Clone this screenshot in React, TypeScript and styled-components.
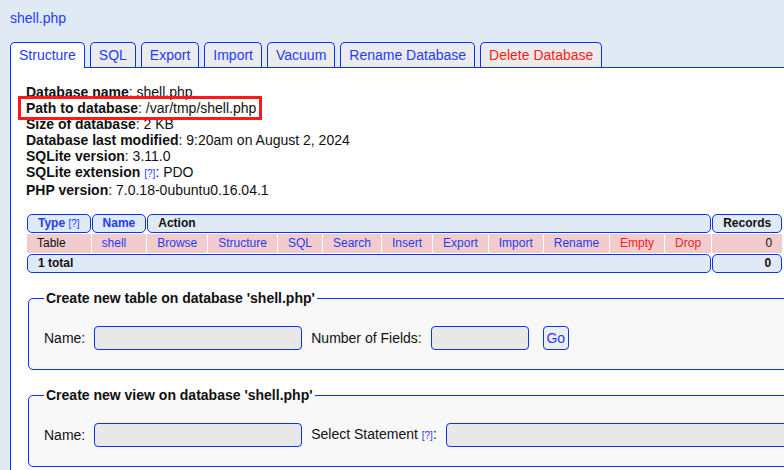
import styled, { createGlobalStyle } from 'styled-components';

const GlobalStyle = createGlobalStyle`
  html, body {
    margin: 0;
    padding: 0;
    overflow: hidden;
    background: #e0eaf5;
  }
  body {
    font-family: "Liberation Sans", Arial, sans-serif;
    font-size: 14px;
    color: #111;
  }
`;

const BLUE = '#1f3cf7';
const BORDER = '#0b32f5';
const RED = '#ff1a1a';

const Page = styled.div`
  width: 1100px;
  padding: 10px 0 0 10px;
`;

const Title = styled.a`
  display: block;
  line-height: 16px;
  color: ${BLUE};
  text-decoration: none;
`;

const Tabs = styled.nav`
  display: flex;
  align-items: flex-end;
  gap: 5px;
  margin-top: 16px;
`;

const Tab = styled.a<{ $active?: boolean; $danger?: boolean }>`
  display: block;
  height: ${(p) => (p.$active ? 25 : 24)}px;
  line-height: 24px;
  padding: 0 8px;
  border: 1px solid ${BORDER};
  border-bottom: none;
  border-radius: 5px 5px 0 0;
  background: ${(p) => (p.$active ? '#fff' : '#ebebeb')};
  color: ${(p) => (p.$danger ? RED : BLUE)};
  margin-bottom: ${(p) => (p.$active ? -1 : 0)}px;
  position: relative;
  z-index: ${(p) => (p.$active ? 1 : 0)};
  text-decoration: none;
`;

const Content = styled.main`
  background: #fff;
  border-left: 1px solid ${BORDER};
  border-top: 1px solid ${BORDER};
  padding: 16px 15px 40px;
  min-height: 420px;
`;

const InfoLine = styled.div`
  line-height: 16px;
`;

const Highlight = styled.span`
  position: relative;
  &::after {
    content: '';
    position: absolute;
    top: -4px;
    bottom: -4px;
    left: -8px;
    right: -6px;
    border: 3px solid ${RED};
  }
`;

const Help = styled.a`
  color: ${BLUE};
  font-size: 10px;
  font-weight: normal;
  text-decoration: none;
`;

const Grid = styled.table`
  margin-top: 15px;
  border-spacing: 1px;
  font-size: 12px;
`;

const HeadCell = styled.td<{ $link?: boolean; $right?: boolean }>`
  height: 17px;
  line-height: 17px;
  padding: 0 10px;
  border: 1px solid ${BORDER};
  border-radius: 5px;
  background: #e0eaf5;
  font-weight: bold;
  color: ${(p) => (p.$link ? BLUE : '#111')};
  text-align: ${(p) => (p.$right ? 'right' : 'left')};
  white-space: nowrap;
`;

const Cell = styled.td<{ $tone?: 'link' | 'danger' | 'plain'; $right?: boolean }>`
  height: 19px;
  line-height: 19px;
  padding: 0 10px;
  background: #f2cccc;
  color: ${(p) => (p.$tone === 'link' ? BLUE : p.$tone === 'danger' ? RED : '#111')};
  text-align: ${(p) => (p.$right ? 'right' : 'left')};
  white-space: nowrap;
`;

const Box = styled.fieldset`
  margin: 16px 2px 0;
  padding: 20px 15px 19px;
  border: 1px solid ${BORDER};
  border-radius: 5px;
  background: #f8f8f8;
  & + & {
    margin-top: 17px;
  }
`;

const Legend = styled.legend`
  padding: 0 2px;
  font-weight: bold;
  line-height: 16px;
`;

const Row = styled.div`
  display: flex;
  align-items: center;
  gap: 9px;
  line-height: 16px;
`;

const Field = styled.input<{ $width?: number }>`
  box-sizing: border-box;
  height: 24px;
  width: ${(p) => (p.$width ? `${p.$width}px` : 'auto')};
  flex: ${(p) => (p.$width ? 'none' : '1')};
  border: 1px solid ${BORDER};
  border-radius: 4px;
  background: #e8e8e8;
  margin: 0;
`;

const GoButton = styled.button`
  box-sizing: border-box;
  height: 24px;
  width: 26px;
  margin-left: 5px;
  padding: 0;
  border: 1px solid ${BORDER};
  border-radius: 4px;
  background: #eeeeee;
  color: ${BLUE};
  font-family: inherit;
  font-size: 14px;
`;

const actions: { label: string; danger?: boolean }[] = [
  { label: 'Browse' },
  { label: 'Structure' },
  { label: 'SQL' },
  { label: 'Search' },
  { label: 'Insert' },
  { label: 'Export' },
  { label: 'Import' },
  { label: 'Rename' },
  { label: 'Empty', danger: true },
  { label: 'Drop', danger: true },
];

const tabs = ['Structure', 'SQL', 'Export', 'Import', 'Vacuum', 'Rename Database'];

export default function App() {
  return (
    <>
      <GlobalStyle />
      <Page>
        <Title href="#">shell.php</Title>
        <Tabs>
          {tabs.map((t, i) => (
            <Tab key={t} href="#" $active={i === 0}>
              {t}
            </Tab>
          ))}
          <Tab href="#" $danger>
            Delete Database
          </Tab>
        </Tabs>
        <Content>
          <InfoLine>
            <b>Database name</b>: shell.php
          </InfoLine>
          <InfoLine>
            <Highlight>
              <b>Path to database</b>: /var/tmp/shell.php
            </Highlight>
          </InfoLine>
          <InfoLine>
            <b>Size of database</b>: 2 KB
          </InfoLine>
          <InfoLine>
            <b>Database last modified</b>: 9:20am on August 2, 2024
          </InfoLine>
          <InfoLine>
            <b>SQLite version</b>: 3.11.0
          </InfoLine>
          <InfoLine>
            <b>SQLite extension</b> <Help href="#">[?]</Help>: PDO
          </InfoLine>
          <InfoLine>
            <b>PHP version</b>: 7.0.18-0ubuntu0.16.04.1
          </InfoLine>

          <Grid>
            <thead>
              <tr>
                <HeadCell $link>
                  Type <Help href="#">[?]</Help>
                </HeadCell>
                <HeadCell $link>Name</HeadCell>
                <HeadCell colSpan={10}>Action</HeadCell>
                <HeadCell>Records</HeadCell>
              </tr>
            </thead>
            <tbody>
              <tr>
                <Cell>Table</Cell>
                <Cell $tone="link">shell</Cell>
                {actions.map((a) => (
                  <Cell key={a.label} $tone={a.danger ? 'danger' : 'link'}>
                    {a.label}
                  </Cell>
                ))}
                <Cell $right>0</Cell>
              </tr>
            </tbody>
            <tfoot>
              <tr>
                <HeadCell colSpan={12}>1 total</HeadCell>
                <HeadCell $right>0</HeadCell>
              </tr>
            </tfoot>
          </Grid>

          <Box>
            <Legend>Create new table on database 'shell.php'</Legend>
            <Row>
              <span>Name:</span>
              <Field $width={208} />
              <span>Number of Fields:</span>
              <Field $width={98} />
              <GoButton>Go</GoButton>
            </Row>
          </Box>

          <Box>
            <Legend>Create new view on database 'shell.php'</Legend>
            <Row>
              <span>Name:</span>
              <Field $width={208} />
              <span>
                Select Statement <Help href="#">[?]</Help>:
              </span>
              <Field />
            </Row>
          </Box>
        </Content>
      </Page>
    </>
  );
}
